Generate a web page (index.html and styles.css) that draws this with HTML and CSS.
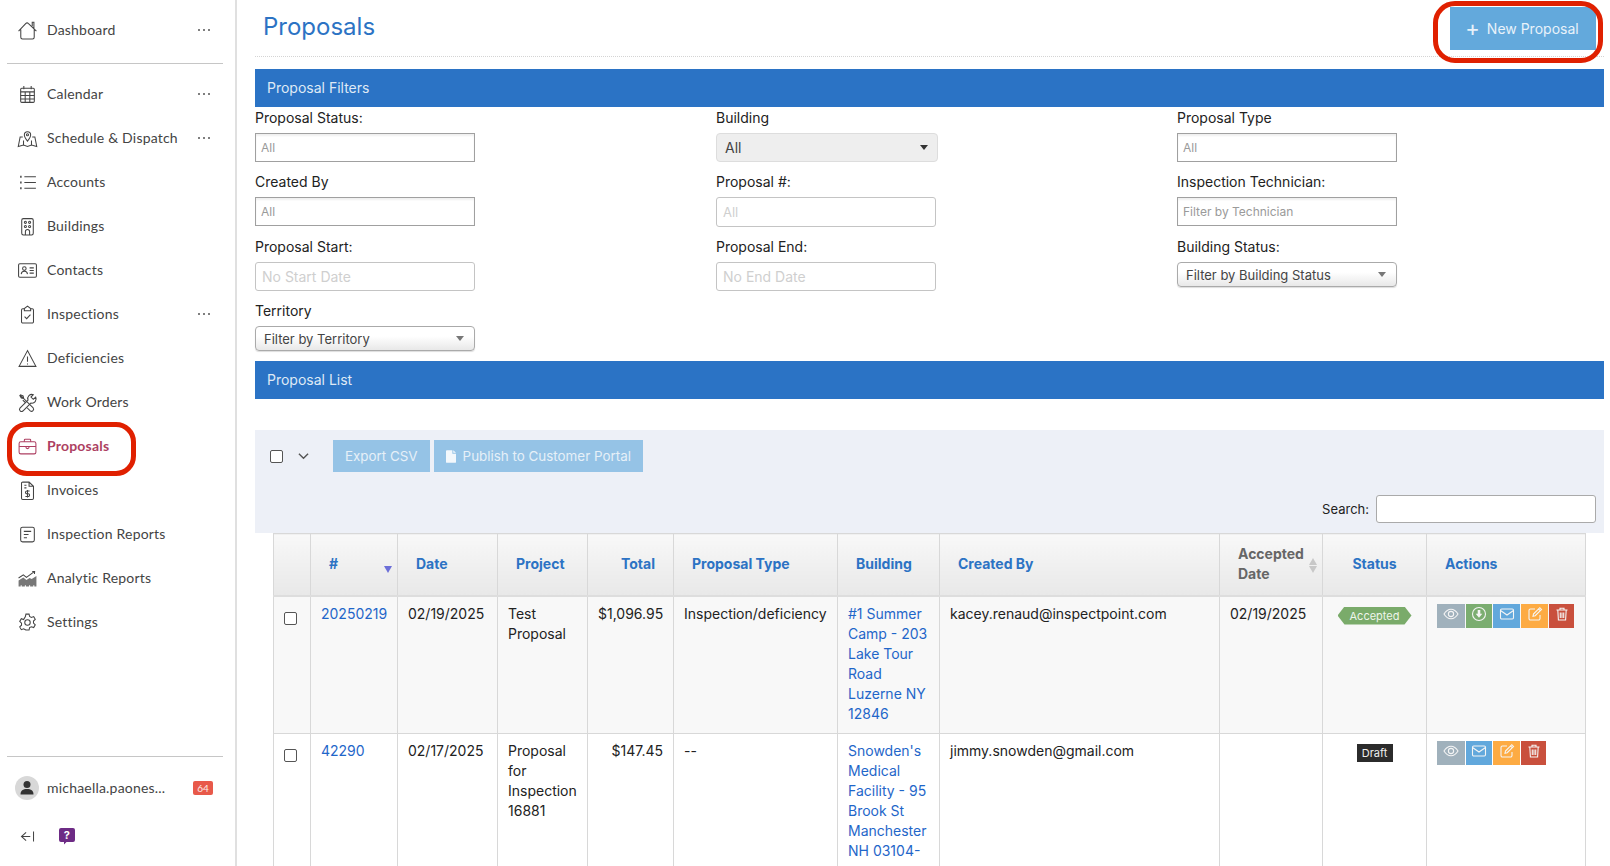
FILE: index.html
```html
<!DOCTYPE html>
<html lang="en">
<head>
    <meta charset="UTF-8">
    <title>Proposals</title>
    <link rel="stylesheet" href="styles.css">
</head>
<body>
    <aside class="sidebar">
        <a class="nav-item">
            <svg class="nav-icon" viewBox="0 0 20 20"><path d="M1.500 10.500 8.500 3.200a1.500 1.500 0 0 1 2.200 0L18.500 10.500M3.600 9v7.400a1.600 1.600 0 0 0 1.600 1.600h9.600a1.600 1.600 0 0 0 1.600-1.600V9M14.500 6V2.200h1.600V8"/></svg>
            <span>Dashboard</span><span class="dots"><i></i><i></i><i></i></span>
        </a>
        <hr class="side-rule side-rule-top">
        <a class="nav-item">
            <svg class="nav-icon" viewBox="0 0 20 20"><rect x="3.500" y="4" width="13" height="13.500" rx="1"/><path d="M3.500 7.500h13M3.500 11h13M3.500 14.200h13M7.800 7.500v10M12.200 7.500v10M6.500 2v3M13.500 2v3"/></svg>
            <span>Calendar</span><span class="dots"><i></i><i></i><i></i></span>
        </a>
        <a class="nav-item">
            <svg class="nav-icon" viewBox="0 0 20 20"><path d="M5.500 8.500H3L1.200 17.600l5-1.400 3.800 1.400 3.800-1.400 5 1.400L17 8.500h-2.500M6.200 16.200V12M13.800 16.200V12"/><path d="M10 12.500C8 10 7 8.600 7 6.600a3 3 0 0 1 6 0c0 2-1 3.400-3 5.900Z"/><circle cx="10" cy="6.400" r="1"/></svg>
            <span>Schedule &amp; Dispatch</span><span class="dots"><i></i><i></i><i></i></span>
        </a>
        <a class="nav-item">
            <svg class="nav-icon" viewBox="0 0 20 20"><path d="M7 4.500h11M7 10h11M7 15.500h11"/><path class="dot-line" d="M3 4.500h1.400M3 10h1.400M3 15.500h1.400"/></svg>
            <span>Accounts</span>
        </a>
        <a class="nav-item">
            <svg class="nav-icon" viewBox="0 0 20 20"><rect x="4.500" y="2.500" width="11" height="15.500" rx="1.600"/><circle cx="8" cy="6" r="1"/><circle cx="12" cy="6" r="1"/><circle cx="8" cy="10" r="1"/><circle cx="12" cy="10" r="1"/><path d="M8 18v-3.200a2 2 0 0 1 4 0V18"/></svg>
            <span>Buildings</span>
        </a>
        <a class="nav-item">
            <svg class="nav-icon" viewBox="0 0 20 20"><rect x="1.500" y="3.500" width="17" height="13" rx="1.200"/><circle cx="7" cy="8.200" r="1.700"/><path d="M4 13.500c.3-2 1.500-2.700 3-2.700s2.700.7 3 2.700M12 7.500h4M12 10h4M12 12.500h4"/></svg>
            <span>Contacts</span>
        </a>
        <a class="nav-item">
            <svg class="nav-icon" viewBox="0 0 20 20"><path d="M7 4.500H5.500a1.200 1.200 0 0 0-1.200 1.200v11.100A1.200 1.200 0 0 0 5.500 18h9a1.200 1.200 0 0 0 1.200-1.200V5.700a1.200 1.200 0 0 0-1.200-1.200H13"/><path d="M7 6.500V4.300L10 2l3 2.300v2.200ZM7.200 12l2 2 3.600-3.800"/></svg>
            <span>Inspections</span><span class="dots"><i></i><i></i><i></i></span>
        </a>
        <a class="nav-item">
            <svg class="nav-icon" viewBox="0 0 20 20"><path d="M10 2.500 2 17.500h16ZM10 8v5M10 14.800v.9"/></svg>
            <span>Deficiencies</span>
        </a>
        <a class="nav-item">
            <svg class="nav-icon" viewBox="0 0 20 20"><path d="M3 2.500 5.800 3.800l.6 2.400 9 9a2 2 0 0 1-2.800 2.800l-3-3M6.400 6.200l-2.300-.5L2.500 3ZM8 10 5.500 7.700"/><path d="M17.800 4.800 15.500 7 13.300 4.800l2.200-2.300a4 4 0 0 0-5 5.200L2.800 15.300a2 2 0 0 0 2.800 2.800l7.600-7.600a4 4 0 0 0 4.600-5.700Z"/></svg>
            <span>Work Orders</span>
        </a>
        <a class="nav-item nav-item-active">
            <svg class="nav-icon" viewBox="0 0 20 20"><rect x="2" y="5.500" width="16" height="11.500" rx="1.600"/><path d="M7 5.500V3.800A.8.8 0 0 1 7.800 3h4.400a.8.8 0 0 1 .8.800v1.700M2 10h16M8.500 10.500c0 2 3 2 3 0"/></svg>
            <span>Proposals</span>
        </a>
        <a class="nav-item">
            <svg class="nav-icon" viewBox="0 0 20 20"><path d="M11.500 2H5.500a1.200 1.200 0 0 0-1.200 1.200v14.100A1.200 1.200 0 0 0 5.500 18.500h9a1.200 1.200 0 0 0 1.200-1.200V6ZM11.500 2v4h4.200M7 5h2M7 7.500h2"/><path d="M12 10.500h-2.600a1.200 1.200 0 0 0 0 2.600h1.300a1.200 1.200 0 0 1 0 2.600H8M10 9.500v7.200"/></svg>
            <span>Invoices</span>
        </a>
        <a class="nav-item">
            <svg class="nav-icon" viewBox="0 0 20 20"><rect x="3.500" y="3" width="13" height="14" rx="1.800"/><path d="M6.500 7h7M6.500 10h4.500M6.500 13h3"/></svg>
            <span>Inspection Reports</span>
        </a>
        <a class="nav-item">
            <svg class="nav-icon" viewBox="0 0 20 20"><path d="M1.500 9.500 6 6.500l3 2.500 7.500-5.500M14.500 3.300l2.300.1-.2 2.300"/><path class="fill-icon" d="M1.500 17.500V12L6 9l3 2.500 3-2 2 1 4.500-3v10h-2v-1h-1v1h-3v-1h-1v1h-3v-1h-1v1h-3v-1h-1v1Z"/></svg>
            <span>Analytic Reports</span>
        </a>
        <a class="nav-item">
            <svg class="nav-icon" viewBox="0 0 20 20"><circle cx="10" cy="10" r="2.600"/><path d="M8.500 2h3l.5 2.300 1.700.9 2.200-.8 1.500 2.600-1.700 1.600v2l1.700 1.600-1.500 2.600-2.200-.8-1.700.9-.5 2.300h-3L8 16.900l-1.700-.9-2.200.8-1.500-2.600 1.700-1.600v-2L2.600 9 4.100 6.400l2.200.8L8 4.300Z"/></svg>
            <span>Settings</span>
        </a>

        <div class="side-bottom">
            <hr class="side-rule">
            <div class="user-row">
                <span class="avatar">
                    <svg viewBox="0 0 24 24"><circle cx="12" cy="8.500" r="3.500"/><path d="M5.500 18.500c0-4 2.500-5.500 6.500-5.500s6.500 1.500 6.500 5.500Z"/></svg>
                </span>
                <span class="user-name">michaella.paones...</span>
                <span class="user-badge">64</span>
            </div>
            <div class="side-tools">
                <svg class="collapse-icon" viewBox="0 0 16 14"><path d="M6.500 2.500 1.500 7l5 4.500M1.500 7h9.500M14.500 1.500v11"/></svg>
                <svg class="help-icon" viewBox="0 0 16 17"><path d="M2 0h12a2 2 0 0 1 2 2v10a2 2 0 0 1-2 2H7.500L5 16.500V14H2a2 2 0 0 1-2-2V2a2 2 0 0 1 2-2Z"/><text x="8" y="11" text-anchor="middle">?</text></svg>
            </div>
        </div>
    </aside>

    <main class="content">
        <header class="page-head">
            <h1>Proposals</h1>
            <button class="new-btn"><span class="plus">+</span> New Proposal</button>
        </header>

        <div class="bar">Proposal Filters</div>
        <div class="filters">
            <div class="field">
                <label>Proposal Status:</label>
                <input class="input-square" type="text" placeholder="All">
            </div>
            <div class="field">
                <label>Building</label>
                <div class="select-plain"><span>All</span><i class="caret caret-dark"></i></div>
            </div>
            <div class="field">
                <label>Proposal Type</label>
                <input class="input-square" type="text" placeholder="All">
            </div>
            <div class="field">
                <label>Created By</label>
                <input class="input-square" type="text" placeholder="All">
            </div>
            <div class="field">
                <label>Proposal #:</label>
                <input class="input-round" type="text" placeholder="All">
            </div>
            <div class="field">
                <label>Inspection Technician:</label>
                <input class="input-square" type="text" placeholder="Filter by Technician">
            </div>
            <div class="field">
                <label>Proposal Start:</label>
                <input class="input-round input-date" type="text" placeholder="No Start Date">
            </div>
            <div class="field">
                <label>Proposal End:</label>
                <input class="input-round input-date" type="text" placeholder="No End Date">
            </div>
            <div class="field">
                <label>Building Status:</label>
                <div class="select-grad"><span>Filter by Building Status</span><i class="caret"></i></div>
            </div>
            <div class="field">
                <label>Territory</label>
                <div class="select-grad"><span>Filter by Territory</span><i class="caret"></i></div>
            </div>
        </div>

        <div class="bar">Proposal List</div>

        <div class="list-panel">
            <div class="list-tools">
                <span class="check check-top"></span>
                <svg class="chevron" viewBox="0 0 12 8"><path d="M1 1.500 6 6.500l5-5"/></svg>
                <button class="tool-btn tool-export">Export CSV</button>
                <button class="tool-btn">
                    <svg class="file-icon" viewBox="0 0 11 14"><path d="M1 0h6v4h4v9a1 1 0 0 1-1 1H1a1 1 0 0 1-1-1V1a1 1 0 0 1 1-1ZM8 0l3 3H8Z"/></svg>
                    Publish to Customer Portal
                </button>
            </div>
            <div class="list-search">
                <label>Search:</label>
                <input type="text">
            </div>
        </div>

        <table class="list-table">
            <colgroup>
                <col class="c-check"><col class="c-num"><col class="c-date"><col class="c-project"><col class="c-total"><col class="c-type"><col class="c-building"><col class="c-by"><col class="c-accepted"><col class="c-status"><col class="c-actions">
            </colgroup>
            <thead>
                <tr>
                    <th></th>
                    <th class="sorted">#<i class="sort-down"></i></th>
                    <th>Date</th>
                    <th>Project</th>
                    <th class="num">Total</th>
                    <th>Proposal Type</th>
                    <th>Building</th>
                    <th>Created By</th>
                    <th class="muted">Accepted Date<i class="sort-both"></i></th>
                    <th class="center">Status</th>
                    <th>Actions</th>
                </tr>
            </thead>
            <tbody>
                <tr class="row-odd">
                    <td class="cell-check"><span class="check"></span></td>
                    <td><a>20250219</a></td>
                    <td>02/19/2025</td>
                    <td>Test Proposal</td>
                    <td class="num">$1,096.95</td>
                    <td>Inspection/deficiency</td>
                    <td><a>#1 Summer Camp - 203 Lake Tour Road Luzerne NY 12846</a></td>
                    <td>kacey.renaud@inspectpoint.com</td>
                    <td>02/19/2025</td>
                    <td class="center"><span class="tag-accepted">Accepted</span></td>
                    <td class="cell-actions">
                        <div class="actions">
                            <button class="act act-view act-w28"><svg viewBox="0 0 16 16"><path d="M1 8c2-3.200 4.300-4.800 7-4.800s5 1.600 7 4.800c-2 3.200-4.300 4.800-7 4.800S3 11.200 1 8Z"/><circle cx="8" cy="8" r="2.600"/></svg></button>
                            <button class="act act-down act-w26"><svg viewBox="0 0 16 16"><circle cx="8" cy="8" r="6.500"/><path class="solid" d="M6.700 4h2.600v3.800h2L8 11.700 4.700 7.800h2Z"/></svg></button>
                            <button class="act act-mail act-w27"><svg viewBox="0 0 16 16"><rect x="1.500" y="3" width="13" height="10" rx="1.200"/><path d="M1.500 4.500 8 9l6.500-4.500"/></svg></button>
                            <button class="act act-edit act-w27"><svg viewBox="0 0 16 16"><path d="M13 9v3.500a1.500 1.500 0 0 1-1.500 1.500h-8A1.500 1.500 0 0 1 2 12.500v-8A1.500 1.500 0 0 1 3.500 3H8"/><path d="m6.500 8 6.300-6.300 1.700 1.700L8.200 9.700l-2.200.5ZM11.500 3l1.700 1.700"/></svg></button>
                            <button class="act act-del act-w25"><svg viewBox="0 0 16 16"><path d="M2.500 4h11M6 4V2.200h4V4M3.800 4l.6 10h7.200l.6-10M6.300 6.500V12M8 6.500V12M9.700 6.500V12"/></svg></button>
                        </div>
                    </td>
                </tr>
                <tr>
                    <td class="cell-check"><span class="check"></span></td>
                    <td><a>42290</a></td>
                    <td>02/17/2025</td>
                    <td>Proposal for Inspection 16881</td>
                    <td class="num">$147.45</td>
                    <td>--</td>
                    <td><a>Snowden's Medical Facility - 95 Brook St Manchester NH 03104-</a></td>
                    <td>jimmy.snowden@gmail.com</td>
                    <td></td>
                    <td class="center"><span class="tag-draft">Draft</span></td>
                    <td class="cell-actions">
                        <div class="actions">
                            <button class="act act-view act-w28"><svg viewBox="0 0 16 16"><path d="M1 8c2-3.200 4.300-4.800 7-4.800s5 1.600 7 4.800c-2 3.200-4.300 4.800-7 4.800S3 11.200 1 8Z"/><circle cx="8" cy="8" r="2.600"/></svg></button>
                            <button class="act act-mail act-w26"><svg viewBox="0 0 16 16"><rect x="1.500" y="3" width="13" height="10" rx="1.200"/><path d="M1.500 4.500 8 9l6.500-4.500"/></svg></button>
                            <button class="act act-edit act-w27"><svg viewBox="0 0 16 16"><path d="M13 9v3.500a1.500 1.500 0 0 1-1.500 1.500h-8A1.500 1.500 0 0 1 2 12.500v-8A1.500 1.500 0 0 1 3.500 3H8"/><path d="m6.500 8 6.300-6.300 1.700 1.700L8.200 9.700l-2.200.5ZM11.500 3l1.700 1.700"/></svg></button>
                            <button class="act act-del act-w25"><svg viewBox="0 0 16 16"><path d="M2.500 4h11M6 4V2.200h4V4M3.800 4l.6 10h7.200l.6-10M6.300 6.500V12M8 6.500V12M9.700 6.500V12"/></svg></button>
                        </div>
                    </td>
                </tr>
            </tbody>
        </table>
    </main>

    <!-- red callouts drawn on top of the page -->
    <div class="callout callout-nav"></div>
    <div class="callout callout-new"></div>
</body>
</html>
```

FILE: styles.css
```css
* {
    box-sizing: border-box;
}
html, body {
    height: 866px;
    overflow: hidden;
}
body {
    margin: 0;
    display: flex;
    font-family: Inter, "Liberation Sans", sans-serif;
    font-size: 14px;
    line-height: 20px;
    color: #222;
    background-color: #fff;
}

/* sidebar */
.sidebar {
    width: 237px;
    flex-shrink: 0;
    height: 866px;
    padding-top: 8px;
    display: flex;
    flex-direction: column;
    border-right: 2px solid #e0e0e0;
    font-family: Lato, "Liberation Sans", sans-serif;
    font-size: 14px;
    letter-spacing: 0.2px;
    color: #444;
}
.nav-item {
    height: 44px;
    flex-shrink: 0;
    display: flex;
    align-items: center;
    gap: 9px;
    padding: 0 25px 0 17px;
}
.nav-icon {
    width: 21px;
    height: 21px;
    fill: none;
    stroke: #444;
    stroke-width: 1;
    flex-shrink: 0;
}
.nav-icon .dot-line {
    stroke-width: 2;
}
.nav-icon .fill-icon {
    fill: #777;
    stroke: none;
}
.dots {
    margin-left: auto;
    display: flex;
    gap: 3px;
}
.dots i {
    width: 2px;
    height: 2px;
    border-radius: 50%;
    background-color: #555;
}
.nav-item-active {
    color: #ad3f62;
    font-weight: 700;
}
.nav-item-active .nav-icon {
    stroke: #ad3f62;
}
.side-rule {
    width: 216px;
    margin: 0 0 0 7px;
    border: none;
    border-top: 1px solid #c6c6c6;
}
.side-rule-top {
    margin-top: 11px;
    margin-bottom: 8px;
}
.side-bottom {
    margin-top: auto;
    padding-bottom: 21px;
}
.user-row {
    display: flex;
    align-items: center;
    margin-top: 19px;
    padding: 0 0 0 15px;
}
.avatar {
    width: 24px;
    height: 24px;
    border-radius: 50%;
    background-color: #d8d8d8;
    flex-shrink: 0;
}
.avatar svg {
    display: block;
    fill: #333;
}
.user-name {
    margin-left: 8px;
    width: 146px;
    white-space: nowrap;
}
.user-badge {
    width: 20px;
    height: 14px;
    border-radius: 2px;
    background-color: #e8594a;
    color: #fbe9e6;
    font-size: 10px;
    line-height: 14px;
    text-align: center;
    letter-spacing: 0;
}
.side-tools {
    display: flex;
    align-items: center;
    margin-top: 28px;
    padding-left: 20px;
}
.collapse-icon {
    width: 15px;
    height: 13px;
    fill: none;
    stroke: #444;
    stroke-width: 1.1;
}
.help-icon {
    width: 16px;
    height: 17px;
    margin-left: 24px;
}
.help-icon path {
    fill: #6d2b85;
}
.help-icon text {
    fill: #fff;
    font-family: Inter, sans-serif;
    font-size: 11px;
    font-weight: 700;
}

/* main area */
.content {
    flex: 1;
    min-width: 0;
    padding: 0 6px 0 18px;
}
.page-head {
    height: 57px;
    display: flex;
    justify-content: space-between;
    align-items: flex-start;
    padding: 7px 8px 0;
    border-bottom: 1px dotted #d4d4d4;
    margin-bottom: 12px;
}
h1 {
    margin: 0;
    font-size: 24px;
    line-height: 40px;
    font-weight: 400;
    color: #2c73c4;
}
.new-btn {
    width: 146px;
    height: 43px;
    border: none;
    background-color: #63a9dc;
    color: #e8f2fa;
    font-family: inherit;
    font-size: 14px;
    padding: 0 2px 0 0;
}
.plus {
    font-size: 22px;
    line-height: 0;
    font-weight: 400;
    vertical-align: -2px;
    margin-right: 3px;
}
.bar {
    height: 38px;
    padding-left: 12px;
    background-color: #2b73c5;
    color: #dfe9f5;
    line-height: 38px;
}
.filters {
    display: grid;
    grid-template-columns: repeat(3, 461px);
    row-gap: 10px;
    margin: 1px 0 10px;
}
.field label {
    display: block;
    height: 20px;
    margin-bottom: 5px;
}
.field input {
    display: block;
    width: 220px;
    font-family: inherit;
    font-size: 13px;
    outline: none;
}
.input-square {
    height: 29px;
    border: 1px solid #a0a0a0;
    padding: 0 5px 2px;
    box-shadow: inset 0 2px 2px #f0f0f0;
}
.input-square::placeholder {
    color: #9a9a9a;
    font-size: 12px;
}
.input-round {
    height: 30px;
    border: 1px solid #c4c4c4;
    border-radius: 3px;
    padding: 0 6px;
}
.input-round::placeholder {
    color: #cfcfcf;
}
.field .input-date {
    height: 29px;
    font-size: 14px;
}
.select-plain {
    width: 222px;
    height: 29px;
    display: flex;
    align-items: center;
    justify-content: space-between;
    padding: 0 9px 0 8px;
    border: 1px solid #ddd;
    border-radius: 4px;
    background-color: #eee;
    color: #444;
}
.select-grad {
    width: 220px;
    height: 25px;
    display: flex;
    align-items: center;
    justify-content: space-between;
    padding: 0 10px 0 8px;
    border: 1px solid #aaa;
    border-radius: 4px;
    background: linear-gradient(#fff 0%, #fff 40%, #e8e8e8 100%);
    box-shadow: 0 1px 1px #ddd;
    color: #444;
    font-size: 13px;
}
.caret {
    width: 0;
    height: 0;
    border-left: 4px solid transparent;
    border-right: 4px solid transparent;
    border-top: 5px solid #777;
}
.caret-dark {
    border-top-color: #333;
}

/* list toolbar */
.list-panel {
    height: 103px;
    margin-top: 31px;
    padding: 10px 8px 0 15px;
    background-color: #edf0f7;
}
.list-tools {
    display: flex;
    align-items: center;
    height: 32px;
}
.check {
    display: inline-block;
    width: 13px;
    height: 13px;
    border: 1px solid #555;
    border-radius: 2px;
    background-color: #fff;
}
.chevron {
    width: 11px;
    height: 8px;
    margin-left: 15px;
    fill: none;
    stroke: #555;
    stroke-width: 1.5;
}
.tool-btn {
    height: 32px;
    border: none;
    padding: 0 12px;
    background-color: #95c3e6;
    color: #e6f0f8;
    font-family: inherit;
    font-size: 13.4px;
    margin-left: 4px;
    display: flex;
    align-items: center;
    gap: 7px;
}
.tool-export {
    margin-left: 24px;
}
.file-icon {
    width: 10px;
    height: 13px;
    fill: #f3f8fc;
}
.list-search {
    display: flex;
    justify-content: flex-end;
    align-items: center;
    gap: 7px;
    margin-top: 23px;
    font-size: 13px;
}
.list-search input {
    width: 220px;
    height: 28px;
    border: 1px solid #aaa;
    border-radius: 3px;
    background-color: #fff;
}

/* table */
.list-table {
    width: 1312px;
    margin-left: 18px;
    table-layout: fixed;
    border-collapse: collapse;
}
.c-check { width: 37px; }
.c-num { width: 87px; }
.c-date { width: 100px; }
.c-project { width: 90px; }
.c-total { width: 86px; }
.c-type { width: 164px; }
.c-building { width: 102px; }
.c-by { width: 280px; }
.c-accepted { width: 103px; }
.c-status { width: 104px; }
.c-actions { width: 159px; }
.list-table th {
    height: 62px;
    padding: 0 18px;
    position: relative;
    text-align: left;
    color: #2c73c4;
    font-weight: 700;
    border: 1px solid #d8d8d8;
    border-bottom: 2px solid #ddd;
    background: linear-gradient(#f8f8f8, #e8e8e8);
}
.list-table th.muted {
    color: #666;
}
.list-table th.num,
.list-table td.num {
    text-align: right;
}
.list-table th.center,
.list-table td.center {
    text-align: center;
}
.list-table td {
    padding: 7px 10px 9px;
    vertical-align: top;
    border: 1px solid #d8d8d8;
}
.row-odd td {
    background-color: #f8f8f8;
}
.list-table a {
    color: #1f66c9;
}
.sort-down {
    position: absolute;
    right: 5px;
    bottom: 22px;
    width: 0;
    height: 0;
    border-left: 4px solid transparent;
    border-right: 4px solid transparent;
    border-top: 7px solid #6c6fd8;
}
.sort-both {
    position: absolute;
    right: 5px;
    top: 24px;
    width: 0;
    height: 0;
    border-left: 4.5px solid transparent;
    border-right: 4.5px solid transparent;
    border-bottom: 7px solid #c8c8c8;
}
.sort-both::after {
    content: "";
    position: absolute;
    left: -4.5px;
    top: 8px;
    border-left: 4.5px solid transparent;
    border-right: 4.5px solid transparent;
    border-top: 7px solid #c8c8c8;
}
.list-table .cell-check {
    padding: 15px 0 0 10px;
}
.cell-check .check {
    display: block;
}
.tag-accepted {
    display: inline-block;
    width: 74px;
    height: 18px;
    margin-top: 3px;
    background-color: #7aab6a;
    color: #eef5eb;
    font-size: 11px;
    line-height: 18px;
    clip-path: polygon(7px 0, calc(100% - 7px) 0, 100% 50%, calc(100% - 7px) 100%, 7px 100%, 0 50%);
}
.tag-draft {
    display: inline-block;
    width: 36px;
    height: 18px;
    margin-top: 3px;
    background-color: #2b2b2b;
    color: #eee;
    font-size: 11px;
    line-height: 18px;
}
.list-table .cell-actions {
    padding: 7px 0 0 10px;
}
.actions {
    display: flex;
    gap: 1px;
}
.act {
    height: 24px;
    padding: 0;
    border: none;
    display: flex;
    align-items: center;
    justify-content: center;
}
.act svg {
    width: 16px;
    height: 16px;
    margin-top: -4px;
    fill: none;
    stroke: #f5f5f5;
    stroke-width: 1.1;
}
.act svg .solid {
    fill: #f5f5f5;
    stroke: none;
}
.act-w28 { width: 28px; }
.act-w27 { width: 27px; }
.act-w26 { width: 26px; }
.act-w25 { width: 25px; }
.act-view { background-color: #a0b1bc; }
.act-down { background-color: #7bad70; }
.act-mail { background-color: #62a8dc; }
.act-edit { background-color: #fdab43; }
.act-del { background-color: #c9503d; }

/* annotation callouts */
.callout {
    position: absolute;
    border: 5px solid #e02000;
    pointer-events: none;
}
.callout-nav {
    left: 7px;
    top: 422px;
    width: 129px;
    height: 54px;
    border-radius: 20px;
}
.callout-new {
    left: 1433px;
    top: 1px;
    width: 170px;
    height: 62px;
    border-radius: 22px;
}
```
